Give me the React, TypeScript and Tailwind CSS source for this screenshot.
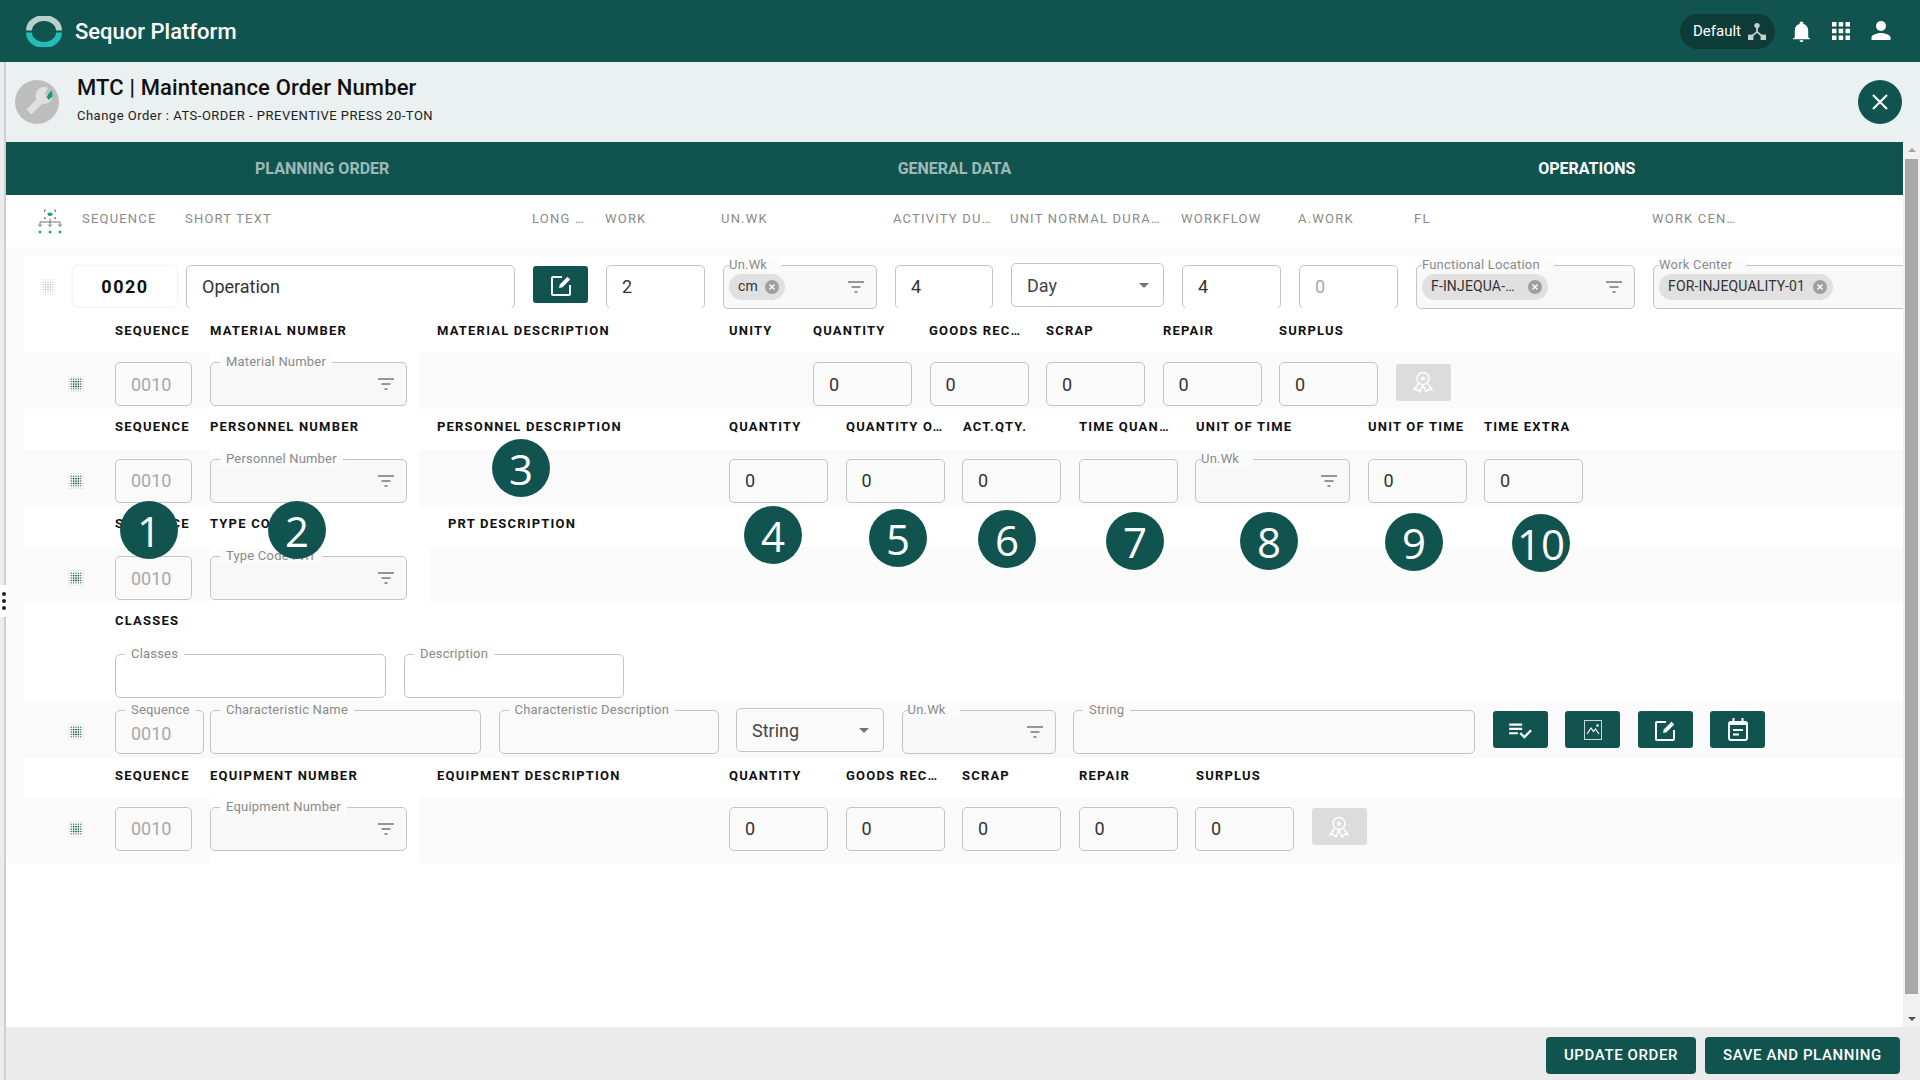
import React from 'react';

const teal = 'bg-[#11544f]';

function DotGrid({ muted = false }: { muted?: boolean }) {
  const dots = [];
  for (let r = 0; r < 7; r++) {
    for (let c = 0; c < 7; c++) {
      const d = Math.max(Math.abs(r - 3), Math.abs(c - 3));
      const radius = d === 3 ? 0.4 : d === 2 ? 0.65 : 0.85;
      dots.push(<circle key={`${r}-${c}`} cx={c * 2.4 + 0.8} cy={r * 2.4 + 0.8} r={radius} fill={muted ? '#c4c4c4' : d === 3 ? '#8fa9a6' : '#11544f'} />);
    }
  }
  return (
    <svg width="16" height="16" viewBox="0 0 16 16" className="shrink-0">
      {dots}
    </svg>
  );
}

function FilterIcon() {
  return (
    <svg width="18" height="18" viewBox="0 0 18 18" fill="none" stroke="#757575" strokeWidth="1.6" className="shrink-0">
      <path d="M1 4h16M4.500 9h9M7.500 14h3" />
    </svg>
  );
}

function Chip({ text, w }: { text: string; w: string }) {
  return (
    <span className={`flex items-center h-[26px] rounded-full bg-[#e0e0e0] pl-[9px] pr-[6px] justify-between text-[14px] tracking-[0.15px] text-[#333] whitespace-nowrap ${w}`}>
      {text}
      <svg width="14" height="14" viewBox="0 0 14 14" className="shrink-0">
        <circle cx="7" cy="7" r="7" fill="#9e9e9e" />
        <path d="M4.500 4.500l5 5M9.500 4.500l-5 5" stroke="#fff" strokeWidth="1.400" />
      </svg>
    </span>
  );
}

function Box({ w, value, muted }: { w: string; value?: string; muted?: boolean }) {
  return (
    <div className={`flex items-center shrink-0 h-[44px] rounded-[5px] border border-[#c4c4c4] pl-[15px] text-[18px] ${muted ? 'text-[#a8a8a8]' : 'text-[#333]'} ${w}`}>
      {value}
    </div>
  );
}

function Legend({ text, tight }: { text: string; tight?: boolean }) {
  return (
    <span className={`absolute top-[-8px] h-[14px] leading-[14px] text-[13px] tracking-[0.2px] text-[#8a8a8a] whitespace-nowrap bg-[#fbfbfb] ${tight ? 'left-[5px] pr-[14px]' : 'left-[9px] px-[6px]'}`}>
      {text}
    </span>
  );
}

function Outlined({ w, label, filter, tight, filled = true, children }: { w: string; label: string; filter?: boolean; tight?: boolean; filled?: boolean; children?: React.ReactNode }) {
  return (
    <div className={`relative flex items-center justify-between shrink-0 h-[44px] rounded-[5px] border border-[#c4c4c4] pl-[5px] pr-[11px] ${filled ? 'bg-[#f8f8f8]' : ''} ${w}`}>
      <Legend text={label} tight={tight} />
      {children || <span />}
      {filter && <FilterIcon />}
    </div>
  );
}

function SelectBox({ w, value }: { w: string; value: string }) {
  return (
    <div className={`flex items-center justify-between shrink-0 h-[44px] -mt-[3px] rounded-[5px] border border-[#c4c4c4] pl-[15px] pr-[14px] text-[18px] text-[#444] ${w}`}>
      {value}
      <span className="w-0 h-0 border-x-[5px] border-x-transparent border-t-[5px] border-t-[#757575]" />
    </div>
  );
}

function IconButton({ children, disabled }: { children: React.ReactNode; disabled?: boolean }) {
  return <div className={`flex items-center justify-center shrink-0 w-[55px] h-[37px] -mt-[4px] rounded-[3px] ${disabled ? 'bg-[#dcdcdc]' : teal}`}>{children}</div>;
}

function EditIcon() {
  return (
    <svg width="22" height="22" viewBox="0 0 22 22" fill="none" stroke="#fff" strokeWidth="2" className="shrink-0">
      <path d="M12 3H3a1 1 0 0 0-1 1v16a1 1 0 0 0 1 1h16a1 1 0 0 0 1-1v-9" />
      <path d="M9 14l.8-3.500L17.500 2.800l2.700 2.700-7.700 7.700z" fill="#fff" stroke="none" />
    </svg>
  );
}

function Ribbon() {
  return (
    <svg width="22" height="22" viewBox="0 0 22 22" fill="none" stroke="#fff" strokeWidth="1.500" className="shrink-0">
      <circle cx="11" cy="7.500" r="6" />
      <path d="M6.500 12.500L2 18.500l3.500-.3L8 21l2.700-6.500M15.500 12.500l4.500 6-3.500-.3L14 21l-2.700-6.500" />
      <path d="M11 4.500l.9 2 2.100.2-1.600 1.400.5 2.100-1.900-1.100-1.900 1.100.5-2.100L8 6.700l2.100-.2z" fill="#fff" stroke="none" />
    </svg>
  );
}

function Label({ w, text }: { w: string; text: string }) {
  return <span className={`shrink-0 whitespace-nowrap text-[13px] font-bold tracking-[1.2px] text-[#111] ${w}`}>{text}</span>;
}

function LabelRow({ className, children }: { className: string; children: React.ReactNode }) {
  return <div className={`flex items-center shrink-0 bg-white pl-[91px] ${className}`}>{children}</div>;
}

function Band({ className, pad, gap = 'w-[209px]', mid, children, select, seqLabel }: { className: string; pad: string; gap?: string; mid?: string; children?: React.ReactNode; select?: React.ReactNode; seqLabel?: string }) {
  return (
    <div className={`flex shrink-0 bg-[#fafafa] ${className}`}>
      <div className={`flex items-center shrink-0 w-[186px] pl-[44px] ${pad}`}>
        <DotGrid />
        <div className="ml-[31px]">
          {seqLabel ? (
            <Outlined w="w-[89px]" label={seqLabel} filled={false}>
              <span className="pl-[10px] pt-[3px] text-[18px] text-[#a8a8a8]">0010</span>
            </Outlined>
          ) : (
            <Box w="w-[77px]" value="0010" muted />
          )}
        </div>
      </div>
      <div className={`flex items-center shrink-0 bg-white ${gap} ${pad}`}>{select}</div>
      {mid && <div className={`shrink-0 ${mid}`} />}
      <div className={`flex items-center gap-[17.5px] ${pad}`}>{children}</div>
    </div>
  );
}

function Marker({ n, className }: { n: number; className: string }) {
  return (
    <div className={`absolute flex items-center justify-center w-[58px] h-[58px] rounded-full ${teal} text-white text-[42px] font-['Open_Sans'] ${className}`}>
      {n}
    </div>
  );
}

export default function App() {
  const columns = [
    ['SEQUENCE', 'w-[103px]'],
    ['SHORT TEXT', 'w-[347px]'],
    ['LONG …', 'w-[73px]'],
    ['WORK', 'w-[116px]'],
    ['UN.WK', 'w-[172px]'],
    ['ACTIVITY DU…', 'w-[117px]'],
    ['UNIT NORMAL DURA…', 'w-[171px]'],
    ['WORKFLOW', 'w-[117px]'],
    ['A.WORK', 'w-[116px]'],
    ['FL', 'w-[238px]'],
    ['WORK CEN…', 'w-[100px]'],
  ];

  return (
    <div className="relative flex flex-col w-[1920px] h-[1080px] overflow-hidden bg-white font-['Roboto'] text-[#222]">
      <header className={`flex items-center shrink-0 h-[62px] pl-[26px] pr-[28px] ${teal}`}>
        <svg width="36" height="31" viewBox="0 0 36 31" fill="none" strokeWidth="6" className="shrink-0">
          <path d="M3 14.500A15 12.500 0 0 1 33 14.500" stroke="#b9cfcc" />
          <path d="M3 16.500A15 12.500 0 0 0 33 16.500" stroke="#22bdb5" />
        </svg>
        <span className="ml-[13px] text-[22px] font-medium text-white">Sequor Platform</span>
        <div className="flex items-center justify-between ml-auto w-[95px] h-[35px] pl-[13px] pr-[9px] rounded-full bg-[#0d3b38] text-[15px] text-white">
          Default
          <svg width="18" height="18" viewBox="0 0 20 20" fill="#c4cfcd" className="shrink-0">
            <circle cx="10" cy="4" r="3" />
            <path d="M10 6v6M10 11l-6 5M10 11l6 5" stroke="#c4cfcd" strokeWidth="2" />
            <rect x="0" y="14" width="6" height="6" />
            <rect x="14" y="14" width="6" height="6" />
          </svg>
        </div>
        <svg width="23" height="23" viewBox="0 0 24 24" fill="#fff" className="ml-[15px] shrink-0">
          <path d="M12 23c1.100 0 2-.9 2-2h-4c0 1.100.9 2 2 2zm7-5v-7c0-3.300-2-6-5-6.700V3.500a2 2 0 0 0-4 0v.8C7 5 5 7.700 5 11v7l-2 1.500v.5h18v-.5z" />
        </svg>
        <svg width="18" height="18" viewBox="0 0 18 18" fill="#fff" className="ml-[19px] shrink-0">
          <path d="M0 0h4.500v4.500H0zM6.700 0h4.500v4.500H6.700zM13.500 0H18v4.500h-4.500zM0 6.700h4.500v4.500H0zM6.700 6.700h4.500v4.500H6.700zM13.500 6.700H18v4.500h-4.500zM0 13.500h4.500V18H0zM6.700 13.500h4.500V18H6.700zM13.500 13.500H18V18h-4.500z" />
        </svg>
        <svg width="22" height="22" viewBox="0 0 22 22" fill="#fff" className="ml-[20px] shrink-0">
          <circle cx="11" cy="6" r="5" />
          <path d="M1.500 20v-2.500c0-3 6.300-4.500 9.500-4.500s9.500 1.500 9.500 4.500V20z" />
        </svg>
      </header>

      <div className="flex flex-1 min-h-0">
        <div className="shrink-0 w-[6px] bg-[#ececec] border-r-2 border-r-[#cfcfcf]" />
        <div className="flex flex-col flex-1 min-w-0">
          <div className="flex items-center shrink-0 h-[80px] bg-[#ebf0f0] pl-[9px] pr-[18px]">
            <div className="flex items-center justify-center shrink-0 w-[44px] h-[44px] rounded-full bg-[#bdbdbd]">
              <svg width="44" height="44" viewBox="0 0 44 44">
                <path d="M14 32l11-11" stroke="#e0e0e0" strokeWidth="7" />
                <circle cx="29" cy="15.500" r="8.500" fill="#e0e0e0" />
                <path d="M29 15.500L34 6l6 4z" fill="#bdbdbd" />
                <path d="M33 14l4-3.500.6 6-4 3.500-2-3z" fill="#0f9e80" />
              </svg>
            </div>
            <div className="flex flex-col ml-[18px] pb-[6px]">
              <span className="text-[22px] leading-[28px] tracking-[0.15px] font-medium text-[#111]">MTC | Maintenance Order Number</span>
              <span className="mt-[6px] text-[13px] leading-[16px] tracking-[0.5px] text-[#222]">Change Order : ATS-ORDER - PREVENTIVE PRESS 20-TON</span>
            </div>
            <div className={`flex items-center justify-center ml-auto w-[44px] h-[44px] rounded-full ${teal}`}>
              <svg width="20" height="20" viewBox="0 0 20 20" stroke="#fff" strokeWidth="2">
                <path d="M3 3l14 14M17 3L3 17" />
              </svg>
            </div>
          </div>

          <div className="flex flex-1 min-h-0">
            <main className="flex flex-col flex-1 min-w-0 overflow-hidden">
              <div className={`grid grid-cols-3 shrink-0 h-[53px] items-center text-center text-[16px] font-bold ${teal}`}>
                <span className="text-white/60">PLANNING ORDER</span>
                <span className="text-white/60">GENERAL DATA</span>
                <span className="text-white">OPERATIONS</span>
              </div>

              <div className="flex items-center shrink-0 h-[52px] pl-[31px] pb-[5px]">
                <svg width="26" height="25" viewBox="0 0 26 25" fill="none" stroke="#666" strokeWidth="0.9" className="shrink-0 mr-[19px] mt-[5px]">
                  <path d="M9 1H7.500v2M17 1h1.500v2M9 9.500H7.500V8M17 9.500h1.500V8M13 9.500V13M3 17v-4h20v4M13 13v4M1.200 15.500L3 17.500l1.800-2M11.200 15.500l1.800 2 1.800-2M21.200 15.500l1.800 2 1.800-2" />
                  <ellipse cx="13" cy="5.300" rx="2.600" ry="1.800" fill="#159c85" stroke="none" />
                  <rect x="1.800" y="21.800" width="2.400" height="2.400" fill="#159c85" stroke="none" />
                  <rect x="11.800" y="21.800" width="2.400" height="2.400" fill="#159c85" stroke="none" />
                  <rect x="21.800" y="21.800" width="2.400" height="2.400" fill="#159c85" stroke="none" />
                </svg>
                {columns.map(([text, w]) => (
                  <span key={text} className={`shrink-0 whitespace-nowrap text-[13px] tracking-[1.2px] text-[#8a8a8a] ${w}`}>
                    {text}
                  </span>
                ))}
              </div>

              <div className="shrink-0 h-[9px] bg-[#fafafa]" />

              <div className="flex flex-col shrink-0 h-[607px] bg-[#fafafa] pl-[18px]">
                <div className="flex items-center shrink-0 h-[52px] bg-white pl-[16px] pt-[9px]">
                  <DotGrid muted />
                  <div className="flex items-center justify-center shrink-0 w-[104px] h-[41px] ml-[17px] rounded-[5px] bg-white shadow-[0_0_3px_rgba(0,0,0,0.12)] text-[18px] font-bold tracking-[1.500px] text-[#111]">0020</div>
                  <div className="ml-[9px]">
                    <Box w="w-[329px]" value="Operation" />
                  </div>
                  <div className="flex items-center ml-[18px]">
                    <IconButton>
                      <EditIcon />
                    </IconButton>
                  </div>
                  <div className="flex items-center gap-[18px] ml-[18px]">
                    <Box w="w-[99px]" value="2" />
                    <Outlined w="w-[154px]" label="Un.Wk" filter tight>
                      <Chip text="cm" w="w-[56px]" />
                    </Outlined>
                    <Box w="w-[98px]" value="4" />
                    <SelectBox w="w-[153px]" value="Day" />
                    <Box w="w-[99px]" value="4" />
                    <Box w="w-[99px]" value="0" muted />
                    <Outlined w="w-[219px]" label="Functional Location" filter tight>
                      <Chip text="F-INJEQUA-…" w="w-[126px]" />
                    </Outlined>
                    <Outlined w="w-[300px]" label="Work Center" tight>
                      <Chip text="FOR-INJEQUALITY-01" w="w-[174px]" />
                    </Outlined>
                  </div>
                </div>

                <LabelRow className="h-[45px]">
                  <Label w="w-[95px]" text="SEQUENCE" />
                  <Label w="w-[227px]" text="MATERIAL NUMBER" />
                  <Label w="w-[292px]" text="MATERIAL DESCRIPTION" />
                  <Label w="w-[84px]" text="UNITY" />
                  <Label w="w-[116px]" text="QUANTITY" />
                  <Label w="w-[117px]" text="GOODS REC…" />
                  <Label w="w-[117px]" text="SCRAP" />
                  <Label w="w-[116px]" text="REPAIR" />
                  <Label w="w-[100px]" text="SURPLUS" />
                </LabelRow>
                <Band className="h-[56px]" pad="pt-[6px]" mid="w-[394px]" select={<Outlined w="w-[197px]" label="Material Number" filter />}>
                  <Box w="w-[99px]" value="0" />
                  <Box w="w-[99px]" value="0" />
                  <Box w="w-[99px]" value="0" />
                  <Box w="w-[99px]" value="0" />
                  <Box w="w-[99px]" value="0" />
                  <IconButton disabled>
                    <Ribbon />
                  </IconButton>
                </Band>

                <LabelRow className="h-[41px] pb-[5px]">
                  <Label w="w-[95px]" text="SEQUENCE" />
                  <Label w="w-[227px]" text="PERSONNEL NUMBER" />
                  <Label w="w-[292px]" text="PERSONNEL DESCRIPTION" />
                  <Label w="w-[117px]" text="QUANTITY" />
                  <Label w="w-[117px]" text="QUANTITY O…" />
                  <Label w="w-[116px]" text="ACT.QTY." />
                  <Label w="w-[117px]" text="TIME QUAN…" />
                  <Label w="w-[172px]" text="UNIT OF TIME" />
                  <Label w="w-[116px]" text="UNIT OF TIME" />
                  <Label w="w-[100px]" text="TIME EXTRA" />
                </LabelRow>
                <Band className="h-[57px]" pad="pt-[4px]" mid="w-[310px]" select={<Outlined w="w-[197px]" label="Personnel Number" filter />}>
                  <Box w="w-[99px]" value="0" />
                  <Box w="w-[99px]" value="0" />
                  <Box w="w-[99px]" value="0" />
                  <Box w="w-[99px]" />
                  <Outlined w="w-[155px]" label="Un.Wk" filter tight />
                  <Box w="w-[99px]" value="0" />
                  <Box w="w-[99px]" value="0" />
                </Band>

                <LabelRow className="h-[40px] pb-[6px]">
                  <Label w="w-[95px]" text="SEQUENCE" />
                  <Label w="w-[238px]" text="TYPE CODE PRT" />
                  <Label w="w-[200px]" text="PRT DESCRIPTION" />
                </LabelRow>
                <Band className="h-[56px]" pad="pt-[6px]" gap="w-[220px]" select={<Outlined w="w-[197px]" label="Type Code PRT" filter />} />

                <div className="flex flex-col shrink-0 h-[98px] bg-white pl-[91px] pt-[8px]">
                  <Label w="w-[95px]" text="CLASSES" />
                  <div className="flex gap-[18px] mt-[23px]">
                    <Outlined w="w-[271px]" label="Classes" filled={false} />
                    <Outlined w="w-[220px]" label="Description" filled={false} />
                  </div>
                </div>

                <Band className="h-[57px]" pad="pt-[4px]" gap="w-[0px]" seqLabel="Sequence">
                  <Outlined w="w-[271px]" label="Characteristic Name" filled={false} />
                  <Outlined w="w-[220px]" label="Characteristic Description" filled={false} />
                  <SelectBox w="w-[148px]" value="String" />
                  <Outlined w="w-[154px]" label="Un.Wk" filter tight />
                  <Outlined w="w-[402px]" label="String" filled={false} />
                  <IconButton>
                    <svg width="26" height="26" viewBox="0 0 24 24" fill="#fff" className="shrink-0">
                      <path d="M14 10H2v2h12v-2zm0-4H2v2h12V6zM2 16h8v-2H2v2zm19.500-4.500L23 13l-6.990 7-4.510-4.500L13 14l3.010 3 5.490-5.500z" />
                    </svg>
                  </IconButton>
                  <IconButton>
                    <svg width="20" height="22" viewBox="0 0 20 22" fill="none" className="shrink-0">
                      <rect x="1.500" y="1.500" width="17" height="19" stroke="#c9d8d6" strokeWidth="1" />
                      <path d="M4 15l4-6 2.500 3.500L12.500 10l3.500 5" stroke="#fff" strokeWidth="1.200" />
                      <circle cx="14.500" cy="6.500" r="1.200" fill="#fff" />
                    </svg>
                  </IconButton>
                  <IconButton>
                    <EditIcon />
                  </IconButton>
                  <IconButton>
                    <svg width="20" height="23" viewBox="0 0 20 23" fill="none" stroke="#fff" strokeWidth="2" className="shrink-0">
                      <rect x="1" y="4" width="18" height="18" rx="2" />
                      <path d="M5.500 0v5M14.500 0v5M1 6h18M5 12h10M5 16.500h6" />
                    </svg>
                  </IconButton>
                </Band>

                <LabelRow className="h-[40px] pb-[4px]">
                  <Label w="w-[95px]" text="SEQUENCE" />
                  <Label w="w-[227px]" text="EQUIPMENT NUMBER" />
                  <Label w="w-[292px]" text="EQUIPMENT DESCRIPTION" />
                  <Label w="w-[117px]" text="QUANTITY" />
                  <Label w="w-[116px]" text="GOODS REC…" />
                  <Label w="w-[117px]" text="SCRAP" />
                  <Label w="w-[117px]" text="REPAIR" />
                  <Label w="w-[100px]" text="SURPLUS" />
                </LabelRow>
                <Band className="h-[65px]" pad="pb-[4px]" mid="w-[310px]" select={<Outlined w="w-[197px]" label="Equipment Number" filter />}>
                  <Box w="w-[99px]" value="0" />
                  <Box w="w-[99px]" value="0" />
                  <Box w="w-[99px]" value="0" />
                  <Box w="w-[99px]" value="0" />
                  <Box w="w-[99px]" value="0" />
                  <IconButton disabled>
                    <Ribbon />
                  </IconButton>
                </Band>
              </div>
            </main>

            <div className="relative flex flex-col items-center shrink-0 w-[17px] bg-[#f1f1f1] pt-[17px]">
              <div className="w-[13px] h-[835px] bg-[#a8a8a8]" />
              <span className="absolute top-[6px] w-0 h-0 border-x-[4px] border-x-transparent border-b-[4px] border-b-[#a3a3a3]" />
              <span className="absolute bottom-[6px] w-0 h-0 border-x-[4px] border-x-transparent border-t-[4px] border-t-[#505050]" />
            </div>
          </div>

          <footer className="flex items-center justify-end shrink-0 h-[53px] gap-[9px] bg-[#ebebeb] pr-[20px] pt-[4px]">
            <div className={`flex items-center justify-center w-[150px] h-[37px] rounded-[4px] text-[15px] font-medium tracking-[0.6px] text-white ${teal}`}>UPDATE ORDER</div>
            <div className={`flex items-center justify-center w-[195px] h-[37px] rounded-[4px] text-[15px] font-medium tracking-[0.6px] text-white ${teal}`}>SAVE AND PLANNING</div>
          </footer>
        </div>
      </div>

      <div className="absolute left-0 top-[585px] flex flex-col items-center justify-center gap-[3px] w-[8px] h-[32px] bg-white rounded-r-[3px]">
        <span className="w-[4px] h-[4px] rounded-full bg-[#222]" />
        <span className="w-[4px] h-[4px] rounded-full bg-[#222]" />
        <span className="w-[4px] h-[4px] rounded-full bg-[#222]" />
      </div>

      <Marker n={1} className="left-[120px] top-[501px]" />
      <Marker n={2} className="left-[268px] top-[501px]" />
      <Marker n={3} className="left-[492px] top-[439px]" />
      <Marker n={4} className="left-[744px] top-[506px]" />
      <Marker n={5} className="left-[869px] top-[509px]" />
      <Marker n={6} className="left-[978px] top-[510px]" />
      <Marker n={7} className="left-[1106px] top-[512px]" />
      <Marker n={8} className="left-[1240px] top-[512px]" />
      <Marker n={9} className="left-[1385px] top-[513px]" />
      <Marker n={10} className="left-[1512px] top-[514px]" />
    </div>
  );
}
